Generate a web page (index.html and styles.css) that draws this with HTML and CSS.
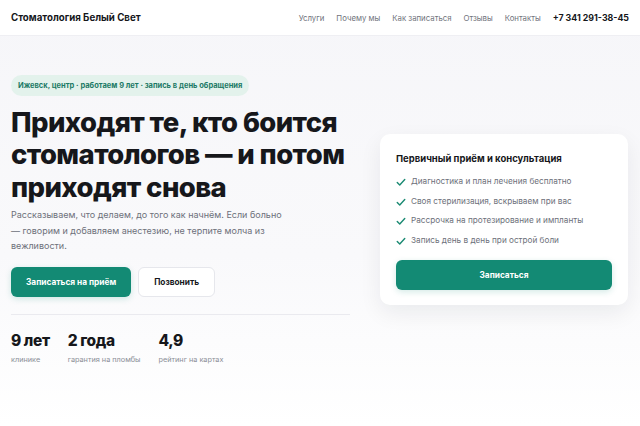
FILE: index.html
```html
<!DOCTYPE html>
<html lang="ru">
<head>
  <meta charset="UTF-8" />
  <meta name="viewport" content="width=device-width, initial-scale=1.0"/>
  <title>Стоматология Белый Свет</title>
  <link rel="stylesheet" href="styles.css">
</head>
<body>
  <header class="topbar">
    <div class="brand">Стоматология Белый Свет</div>
    <nav class="nav">
      <a href="#">Услуги</a>
      <a href="#">Почему мы</a>
      <a href="#">Как записаться</a>
      <a href="#">Отзывы</a>
      <a href="#">Контакты</a>
      <a href="#" class="phone">+7 341 291-38-45</a>
    </nav>
  </header>

  <main class="hero">
    <section class="hero-text">
      <span class="badge">Ижевск, центр · работаем 9 лет · запись в день обращения</span>
      <h1>Приходят те, кто боится стоматологов — и потом приходят снова</h1>
      <p class="lead">Рассказываем, что делаем, до того как начнём. Если больно — говорим и добавляем анестезию, не терпите молча из вежливости.</p>
      <div class="actions">
        <a href="#" class="btn btn-primary">Записаться на приём</a>
        <a href="#" class="btn btn-ghost">Позвонить</a>
      </div>
      <div class="stats">
        <div class="stat">
          <strong>9 лет</strong>
          <span>клинике</span>
        </div>
        <div class="stat">
          <strong>2 года</strong>
          <span>гарантия на пломбы</span>
        </div>
        <div class="stat">
          <strong>4,9</strong>
          <span>рейтинг на картах</span>
        </div>
      </div>
    </section>

    <aside class="card">
      <h3>Первичный приём и консультация</h3>
      <ul class="checks">
        <li><svg viewBox="0 0 12 12"><path d="M1.5 6.5 L4.5 9.5 L10.5 3"/></svg>Диагностика и план лечения бесплатно</li>
        <li><svg viewBox="0 0 12 12"><path d="M1.5 6.5 L4.5 9.5 L10.5 3"/></svg>Своя стерилизация, вскрываем при вас</li>
        <li><svg viewBox="0 0 12 12"><path d="M1.5 6.5 L4.5 9.5 L10.5 3"/></svg>Рассрочка на протезирование и импланты</li>
        <li><svg viewBox="0 0 12 12"><path d="M1.5 6.5 L4.5 9.5 L10.5 3"/></svg>Запись день в день при острой боли</li>
      </ul>
      <a href="#" class="btn btn-primary btn-block">Записаться</a>
    </aside>
  </main>
</body>
</html>
```

FILE: styles.css
```css
* {
  box-sizing: border-box;
}

body {
  font-family: Inter, 'Noto Sans', sans-serif;
  margin: 0;
  min-height: 426px;
  background: linear-gradient(#f6f6f9 0%, #f9f9fb 60%, #ffffff 100%);
  color: #16171b;
}

a {
  text-decoration: none;
  color: inherit;
}

.topbar {
  height: 36px;
  background: #fff;
  border-bottom: 1px solid #efeff3;
  display: flex;
  align-items: center;
  justify-content: space-between;
  padding: 0 11px;
}

.brand {
  font-size: 9.7px;
  font-weight: 700;
}

.nav {
  display: flex;
  align-items: center;
  gap: 12px;
  font-size: 7.8px;
  color: #70737c;
}

.nav .phone {
  font-size: 8.8px;
  font-weight: 700;
  color: #16171b;
}

.hero {
  display: grid;
  grid-template-columns: 339px 248px;
  column-gap: 30px;
  align-items: center;
  padding: 39px 11px 0;
}

.hero-text {
  display: flex;
  flex-direction: column;
  align-items: flex-start;
}

.badge {
  background: #e3f2ec;
  color: #1c7a66;
  font-size: 7.5px;
  line-height: 9px;
  font-weight: 700;
  padding: 6px 7px;
  border-radius: 11px;
}

h1 {
  font-size: 27.5px;
  line-height: 32.5px;
  font-weight: 800;
  letter-spacing: -0.6px;
  margin: 9.5px 0 4px;
}

.lead {
  font-size: 9px;
  line-height: 15.5px;
  color: #6d707a;
  margin: 0 0 13px;
  max-width: 282px;
}

.actions {
  display: flex;
  gap: 7px;
  align-self: stretch;
  padding-bottom: 17px;
  border-bottom: 1px solid #eaeaef;
}

.btn {
  display: inline-flex;
  align-items: center;
  justify-content: center;
  height: 30px;
  padding: 0 15px;
  border-radius: 6px;
  font-size: 8.3px;
  font-weight: 700;
}

.btn-primary {
  background: #138a74;
  color: #fff;
  box-shadow: 0 2px 6px rgba(19, 138, 116, 0.18);
}

.btn-ghost {
  background: #fff;
  border: 1px solid #e6e7ec;
  color: #16171b;
}

.stats {
  display: flex;
  gap: 18px;
  padding-top: 17px;
}

.stat strong {
  display: block;
  font-size: 15.5px;
  line-height: 18px;
  font-weight: 800;
  letter-spacing: -0.4px;
}

.stat span {
  display: block;
  margin-top: 5px;
  font-size: 7.3px;
  line-height: 9px;
  color: #8a8d96;
}

.card {
  background: #fff;
  border-radius: 10px;
  padding: 19px 16px 15px;
  box-shadow: 0 8px 22px rgba(20, 24, 40, 0.07);
}

.card h3 {
  font-size: 9.5px;
  line-height: 11.5px;
  font-weight: 700;
  margin: 0 0 7px;
}

.checks {
  list-style: none;
  margin: 0 0 10px;
  padding: 0;
}

.checks li {
  display: flex;
  align-items: center;
  gap: 5px;
  height: 19.5px;
  font-size: 8.2px;
  color: #6d707a;
}

.checks svg {
  width: 10px;
  height: 10px;
  margin-top: 2px;
  fill: none;
  stroke: #1b8a73;
  stroke-width: 1.7;
  stroke-linecap: round;
  stroke-linejoin: round;
}

.btn-block {
  display: flex;
  width: 100%;
}
```
